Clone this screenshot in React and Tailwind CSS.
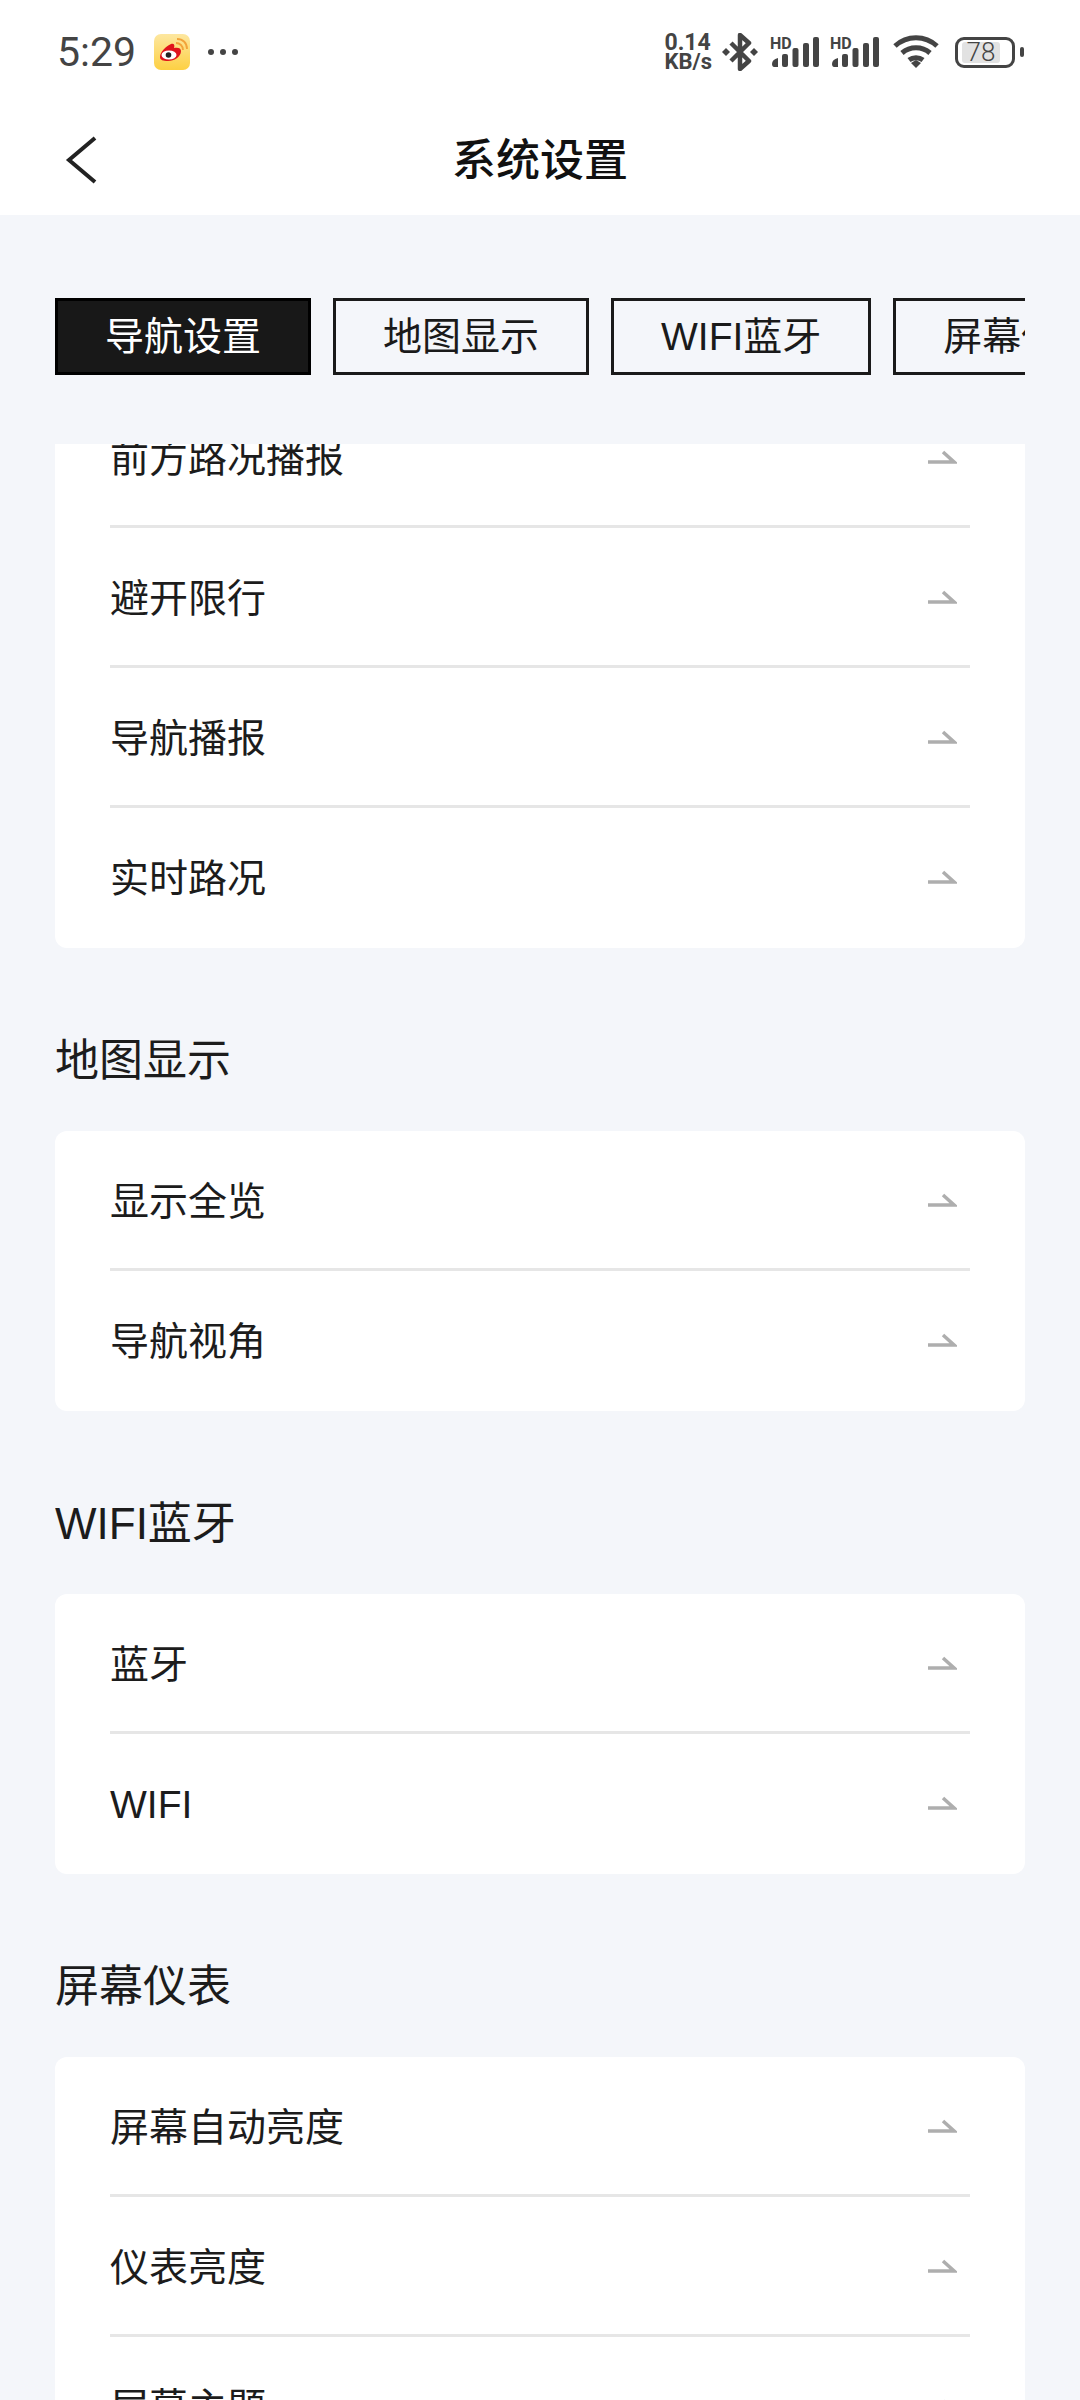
const sections = [
  { title: null, rows: ["前方路况播报", "避开限行", "导航播报", "实时路况"] },
  { title: "地图显示", rows: ["显示全览", "导航视角"] },
  { title: "WIFI蓝牙", rows: ["蓝牙", "WIFI"] },
  { title: "屏幕仪表", rows: ["屏幕自动亮度", "仪表亮度", "屏幕主题"] },
];

const tabs = ["导航设置", "地图显示", "WIFI蓝牙", "屏幕仪表"];

const Signal = () => (
  <svg width="50" height="30" viewBox="0 0 50 30" className="text-[#444]">
    <text x="0" y="11.5" fontSize="16" fontWeight="700" fill="currentColor" fontFamily="Roboto, sans-serif">HD</text>
    <path d="M2 27c0-3 2-5 6-6v9H4c-1 0-2-1-2-3z" fill="currentColor" />
    <rect x="12" y="17" width="6" height="13" rx="2" fill="currentColor" />
    <rect x="22.5" y="11" width="6" height="19" rx="2" fill="currentColor" />
    <rect x="33" y="6" width="6" height="24" rx="2" fill="currentColor" />
    <rect x="43" y="0" width="6" height="30" rx="2" fill="currentColor" />
  </svg>
);

const StatusBar = () => (
  <div className="flex h-[104px] items-center justify-between pl-[57px] pr-[56px] text-[#444]">
    <div className="flex items-center">
      <span className="text-[41px] leading-none font-['Roboto',sans-serif]">5:29</span>
      <svg width="36" height="36" viewBox="0 0 36 36" className="ml-[18px]">
        <defs>
          <linearGradient id="wb" x1="0" y1="0" x2="0" y2="1">
            <stop offset="0" stopColor="#fde7a0" />
            <stop offset="1" stopColor="#fdd043" />
          </linearGradient>
        </defs>
        <rect width="36" height="36" rx="7" fill="url(#wb)" />
        <path d="M6 23c0-5 6-11 11-13 3-1 4 1 3 4 4-1 7 0 7 3 0 6-7 10-13 10-5 0-8-1-8-4z" fill="#e0141c" />
        <ellipse cx="15" cy="21" rx="7.5" ry="4.6" fill="#fff" />
        <circle cx="14.5" cy="21" r="2.8" fill="#222" />
        <path d="M22 9c4 0 7 3 7 7M23 5c6 0 10 4 10 10" stroke="#f2a33a" strokeWidth="1.8" fill="none" />
      </svg>
      <div className="ml-[18px] flex gap-[6px]">
        <span className="size-[6px] rounded-full bg-[#444]" />
        <span className="size-[6px] rounded-full bg-[#444]" />
        <span className="size-[6px] rounded-full bg-[#444]" />
      </div>
    </div>
    <div className="flex items-center">
      <div className="flex flex-col gap-[1px] text-[22px] leading-[18px] font-bold font-['Roboto',sans-serif]">
        <span className="text-[23px]">0.14</span>
        <span>KB/s</span>
      </div>
      <svg width="36" height="38" viewBox="0 0 36 38" className="ml-[10px]">
        <path d="M9 10l18 18-9 8V2l9 8L9 28" stroke="currentColor" strokeWidth="4.5" fill="none" strokeLinejoin="round" />
        <path d="M4 15l4 4-4 4-4-4zM32 15l4 4-4 4-4-4z" fill="currentColor" />
      </svg>
      <div className="ml-[12px] flex gap-[10px]">
        <Signal />
        <Signal />
      </div>
      <svg width="46" height="34" viewBox="0 0 46 34" className="ml-[13px]">
        <path d="M2 11c12-11 30-11 42 0M9 18c8-7 20-7 28 0M16 25c4-3 10-3 14 0" stroke="currentColor" strokeWidth="5" fill="none" />
        <path d="M18 28l5-3 5 3-5 5z" fill="currentColor" />
      </svg>
      <div className="ml-[16px] flex items-center">
        <div className="flex h-[31px] w-[60px] items-center rounded-[9px] border-[3px] border-[#444] px-[4px]">
          <span className="h-[21px] w-[38px] rounded-[3px] bg-[#e2e2e2] text-center text-[26px] leading-[21px] font-light font-['Roboto',sans-serif]">78</span>
        </div>
        <span className="ml-[5px] h-[10px] w-[4px] rounded-full bg-[#444]" />
      </div>
    </div>
  </div>
);

const Row = ({ label }) => (
  <div className="mx-[55px] flex h-[140px] items-center justify-between border-b-[3px] border-[#e6e6e6] pr-[13px] last:border-b-transparent">
    <span className="pt-[3px] text-[39px] leading-none text-[#1c1c1c]">{label}</span>
    <svg width="30" height="16" viewBox="0 0 30 16">
      <path d="M1 13h26L16 3" stroke="#aeaeae" strokeWidth="3.5" fill="none" />
    </svg>
  </div>
);

export default function App() {
  return (
    <div className="flex h-[2400px] w-[1080px] flex-col overflow-hidden bg-[#f4f6fa] font-['Liberation_Sans','Noto_Sans_CJK_SC',sans-serif]">
      <div className="h-[215px] shrink-0 bg-white">
        <StatusBar />
        <div className="grid h-[111px] grid-cols-[1fr_auto_1fr] items-center pl-[65px]">
          <svg width="32" height="48" viewBox="0 0 32 48">
            <path d="M30 2L4 24l26 22" stroke="#222" strokeWidth="4" fill="none" />
          </svg>
          <h1 className="-ml-[65px] pt-[3px] text-[44px] font-medium leading-none text-[#111]">系统设置</h1>
          <span />
        </div>
      </div>

      <div className="mx-[55px] mt-[83px] flex h-[77px] shrink-0 gap-[22px] overflow-hidden">
        {tabs.map((tab, i) => (
          <div
            key={tab}
            className={`flex shrink-0 items-center justify-center border-[3px] px-[47px] text-[39px] leading-none ${
              i === 0 ? "border-black bg-[#181818] text-white" : "border-[#1a1a1a] text-[#1a1a1a]"
            }`}
          >
            {tab}
          </div>
        ))}
      </div>

      <div className="mx-[55px] mt-[69px] min-h-0 flex-1 overflow-hidden">
        <div className="-mt-[56px]">
          {sections.map((section) => (
            <section key={section.rows[0]}>
              {section.title && (
                <h2 className="flex h-[183px] items-center pt-[42px] text-[44px] leading-none text-[#1c1c1c]">{section.title}</h2>
              )}
              <div className="rounded-[12px] bg-white">
                {section.rows.map((row) => (
                  <Row key={row} label={row} />
                ))}
              </div>
            </section>
          ))}
        </div>
      </div>
    </div>
  );
}
